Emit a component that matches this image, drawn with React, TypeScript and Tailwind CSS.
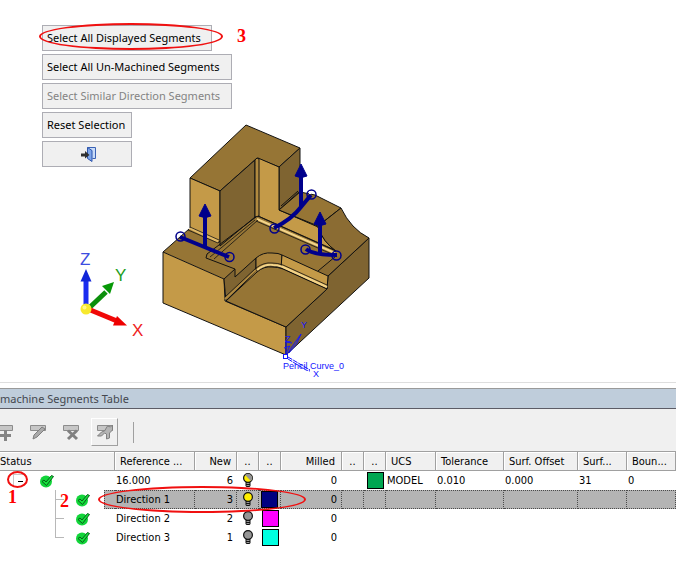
import type { ReactNode } from "react";
import { clsx } from "clsx";

type Bulb = "half" | "on" | "off";

type Segment = {
  name: string;
  count: number;
  bulb: Bulb;
  swatch: string;
  selected?: boolean;
  last?: boolean;
};

const segments: Segment[] = [
  { name: "Direction 1", count: 3, bulb: "on", swatch: "bg-[#000080]", selected: true },
  { name: "Direction 2", count: 2, bulb: "off", swatch: "bg-[#ff00ff]" },
  { name: "Direction 3", count: 1, bulb: "off", swatch: "bg-[#00ffe1]", last: true },
];

const columns = [
  { label: "Status", width: "w-[119px]", align: "text-left pl-1" },
  { label: "Reference ...", width: "w-[80px]", align: "text-left pl-[5px]" },
  { label: "New", width: "w-[42px]", align: "text-right pr-[5px]" },
  { label: "..", width: "w-[22px]", align: "text-center" },
  { label: "..", width: "w-[22px]", align: "text-center" },
  { label: "Milled", width: "w-[61px]", align: "text-right pr-[6px]" },
  { label: "..", width: "w-[22px]", align: "text-center" },
  { label: "..", width: "w-[22px]", align: "text-center" },
  { label: "UCS", width: "w-[50px]", align: "text-left pl-[5px]" },
  { label: "Tolerance", width: "w-[68px]", align: "text-left pl-[5px]" },
  { label: "Surf. Offset", width: "w-[74px]", align: "text-left pl-[5px]" },
  { label: "Surf...", width: "w-[49px]", align: "text-left pl-[5px]" },
  { label: "Boun...", width: "", align: "text-left pl-[5px]" },
];

function CommandButton({ children, className, disabled, label }: { children: ReactNode; className: string; disabled?: boolean; label?: string }) {
  return (
    <button
      type="button"
      disabled={disabled}
      aria-label={label}
      className={clsx(
        "flex h-[26px] items-center border border-[#adadb4] bg-[#f0f0f0] pl-1 whitespace-nowrap text-black disabled:text-[#838383]",
        className
      )}
    >
      {children}
    </button>
  );
}

function ExitIcon() {
  return (
    <svg width="16" height="16" viewBox="0 0 16 16" className="mx-auto">
      <path d="M6.5 1.5h8v11h-3" fill="#c9dcf8" stroke="#3b62b5" />
      <path d="M6.5 1.5l4.5 3v11l-4.5-3z" fill="#7ea6ea" stroke="#2d55ad" />
      <path d="M0 7.5h4V5l4.5 4L4 12.500V10.500H0z" fill="#303030" />
    </svg>
  );
}

function Triad() {
  return (
    <g fontFamily="'Liberation Sans', sans-serif" fontSize="17">
      <path d="M88 309L106 292" stroke="#0b8f0b" strokeWidth="5" />
      <path d="M114 282L110 294L102 286z" fill="#079807" />
      <path d="M88 309L117 321" stroke="#f00808" strokeWidth="5" />
      <path d="M127 325.500L113 325.500L117 316z" fill="#e00" />
      <path d="M86 307V280" stroke="#1a2cf0" strokeWidth="5" />
      <path d="M86 269L91.500 281.500H80.500z" fill="#1226d8" />
      <circle cx="86" cy="309" r="5.500" fill="#f7e92e" />
      <circle cx="84.500" cy="307.500" r="2" fill="#fff78a" />
      <text x="80" y="265" fill="#3d4de0">Z</text>
      <text x="115" y="281" fill="#1c9e1c">Y</text>
      <text x="132" y="336" fill="#ee2222">X</text>
    </g>
  );
}

function Part() {
  return (
    <g stroke="#111" strokeWidth="1" strokeLinejoin="round">
      {/* silhouette and floors */}
      <path d="M163 252L188 230L257 190L300 192L341 209Q350 228 369 238L328 276L286 327L224 279z" fill="#967535" stroke="none" />
      <path d="M163 252L189 229" fill="none" />
      {/* outer walls */}
      <path d="M163 252L224 279L225 301L286 327V355L163 303z" fill="#c49a48" />
      <path d="M286 327L327 289L328 276L369 238V278L286 355z" fill="#7f6431" />
      {/* tall block */}
      <path d="M246 125L300 148L279 167L257 158L220 191L190 178z" fill="#967535" />
      <path d="M190 178L220 191V242L190 228z" fill="#c49a48" />
      <path d="M220 191L255 160V217L220 246z" fill="#7f6431" />
      <path d="M279 167L300 148V191L279 210z" fill="#7f6431" />
      {/* back wall */}
      <path d="M258 158L279 167V210L318 227Q323 242 336 251L258 216z" fill="#c49a48" />
      <path d="M255 160L257 158L259 159V216L255 217z" fill="#b18a3f" />
      <path d="M257 219L335 253" stroke="#f3d489" strokeWidth="2" />
      <path d="M256 221L334 255M258 216L335 250" fill="none" strokeWidth="0.800" />
      {/* right step with concave flank */}
      <path d="M300 192L315 195L341 208L318 226L279 210z" fill="#967535" />
      <path d="M281 206L298 191" fill="none" />
      <path d="M341 208Q351 229 369 238L345 259L336 251Q323 242 318 227z" fill="#8b6c33" stroke="none" />
      <path d="M318 226L341 208Q351 229 369 238M318 227Q323 242 336 251" fill="none" />
      <path d="M369 238L328 276L318 271L337 256L345 258" fill="#8b6c33" stroke="none" />
      <path d="M369 238L328 276M318 271L336 256" fill="none" />
      {/* left step */}
      <path d="M189 229L191 227L219 240L218 243z" fill="#e0b865" stroke="none" />
      <path d="M190 227L219 240M188 230L218 243L220 241" fill="none" strokeWidth="0.800" />
      <path d="M256 217L207 254L206 258L235 269" fill="none" />
      <path d="M258 220L214 259M255 220L210 257" fill="none" strokeWidth="0.800" />
      {/* pocket */}
      <path d="M224 279L235 269V277L256 258V271L226 301z" fill="#7f6431" />
      <path d="M256 258Q263 252 272 253Q279 253 282 255V268Q267 262 256 271z" fill="#a8823c" />
      <path d="M282 255L328 276L327 289L281 268z" fill="#c49a48" />
      <path d="M226 301L257 272Q264 266 272 267Q278 267 283 269L327 289L286 327z" fill="#967535" />
      <path d="M257 270Q265 264 273 265Q278 265 283 267L327 287" fill="none" stroke="#f3d489" strokeWidth="2" />
      <path d="M225 299L256 270" fill="none" stroke="#b08a40" strokeWidth="2" />
      <path d="M256 268Q264 262 272 263Q278 263 283 265L327 285M225 297L256 268" fill="none" strokeWidth="0.800" />
    </g>
  );
}

function CurveMarks() {
  return (
    <g fill="none" stroke="#00008b" strokeWidth="1.500">
      <path d="M180 237L229 257" strokeWidth="4" />
      <path d="M205 247V216M301 206V176M320 254V223" strokeWidth="4" />
      <path d="M274 228Q292 219 301 207L311 195" strokeWidth="4" />
      <path d="M306 249Q313 255 337 255" strokeWidth="4" />
      <path d="M205 204L211 216Q205 219 199 216zM301 164L307 176Q301 179 295 176zM320 212L326 224Q320 227 314 224z" fill="#00008b" stroke="#00008b" strokeWidth="1" />
      <circle cx="180.500" cy="236.500" r="4.500" />
      <circle cx="229.500" cy="257" r="4.500" />
      <circle cx="274.500" cy="228.500" r="4.500" />
      <circle cx="311.500" cy="194.500" r="4.500" />
      <circle cx="305.500" cy="249.500" r="4.500" />
      <circle cx="336.500" cy="255.500" r="4.500" />
      <path d="M311 191h-2v3h2z" fill="#fff" stroke="none" />
    </g>
  );
}

function OriginMarks() {
  return (
    <g fill="none" stroke="#1414ff" strokeWidth="1">
      <rect x="283.500" y="354.500" width="4" height="4" fill="#fff" />
      <path d="M287 354L301 334L297 343L289 353M286 354V342L292 343M284 348L290 346L286 353" />
      <path d="M288 357L310 370M288 359L306 370L310 371" strokeDasharray="5 1" />
      <g fill="#1414ff" stroke="none" fontFamily="'Liberation Sans', sans-serif" fontSize="9">
        <text x="283" y="369">Pencil Curve_0</text>
        <text x="301" y="328">Y</text>
        <text x="285" y="342">Z</text>
        <text x="313" y="377">X</text>
      </g>
    </g>
  );
}

function BulbIcon({ state }: { state: Bulb }) {
  return (
    <svg width="12" height="15" viewBox="0 0 12 15" className="mx-auto block">
      <path d="M3.500 8h5v5l-1 1h-3l-1-1z" fill="#111" />
      <circle cx="6" cy="5" r="4.400" fill={state === "off" ? "#959595" : "#ffee00"} stroke="#111" strokeWidth="1.200" />
      {state === "half" && <path d="M3.100 2.100A4 4 0 0 1 8.900 7.900z" fill="#959595" />}
      <path d="M4.500 10.500h3M4.500 12.500h3" stroke="#999" />
    </svg>
  );
}

function CheckIcon() {
  return (
    <svg width="14" height="14" viewBox="0 0 14 14" className="block shrink-0">
      <circle cx="6" cy="7.500" r="6" fill="#12d53a" />
      <path d="M2 7.500L4 6L6 8L11.500 1.500L13.500 2.500L6.500 11.500z" fill="#16e03c" stroke="#075e18" />
    </svg>
  );
}

function ToolIcon({ kind }: { kind: "add" | "edit" | "delete" | "run" }) {
  return (
    <svg width="18" height="18" viewBox="0 0 18 18" className="block">
      <path d="M1.500 2.500h15v5h-15z" fill="#c6c6c6" stroke="#8c8c8c" />
      {kind === "add" && <path d="M8 7h3v4h4v3h-4v4H8v-4H4v-3h4z" fill="#858585" />}
      {kind === "edit" && <path d="M4 16l1-4L13 4l3 2-8 8z" fill="#aaa" stroke="#7e7e7e" />}
      {kind === "delete" && <path d="M6 7.500l9 8.500M15 7.500L6 16" stroke="#808080" strokeWidth="3" />}
      {kind === "run" && (
        <path d="M1.500 13l4-4 3-1 3-5 3 1 2-2v5l-3 3v5l-3 1v-5l-2-1-3 3z" fill="#b4b4b4" stroke="#808080" />
      )}
    </svg>
  );
}

function Swatch({ color }: { color: string }) {
  return <div className={clsx("mx-auto size-[17px] border border-black", color)} />;
}

function TreeBranch({ last }: { last?: boolean }) {
  return (
    <div className="h-[19px] w-[9px] shrink-0">
      <div className="h-[10px] border-b border-l border-[#b8b8b8]" />
      {!last && <div className="h-[9px] border-l border-[#b8b8b8]" />}
    </div>
  );
}

function SegmentRow({ segment }: { segment: Segment }) {
  const cell = clsx("h-[19px] p-0", segment.selected && "border-y border-r border-dotted border-[#4a4a4a] bg-[#b4b4b4]");
  return (
    <tr aria-selected={segment.selected}>
      <td className="h-[19px] p-0">
        <div className="flex h-[19px] items-center pl-[59px]">
          <TreeBranch last={segment.last} />
          <div className="ml-3">
            <CheckIcon />
          </div>
          {segment.selected && <div className="ml-[14px] h-full grow border-y border-l border-dotted border-[#4a4a4a] bg-[#b4b4b4]" />}
        </div>
      </td>
      <td className={clsx(cell, "pl-px")}>{segment.name}</td>
      <td className={clsx(cell, "text-right", segment.selected ? "pr-[3px]" : "pr-1")}>{segment.count}</td>
      <td className={cell}><BulbIcon state={segment.bulb} /></td>
      <td className={cell}><Swatch color={segment.swatch} /></td>
      <td className={clsx(cell, "text-right", segment.selected ? "pr-1" : "pr-[5px]")}>0</td>
      {columns.slice(6).map((_, i) => (
        <td key={i} className={cell} />
      ))}
    </tr>
  );
}

export default function App() {
  return (
    <main className="overflow-hidden bg-white text-black">
      <section className="relative min-h-[382px] pt-[25px] pl-[42px]">
        <svg width="400" height="382" viewBox="0 0 400 382" className="absolute top-0 left-0" role="img" aria-label="Machined part">
          <Triad />
          <Part />
          <CurveMarks />
          <OriginMarks />
        </svg>
        <div className="relative flex w-fit flex-col items-start gap-[3px] font-['Noto_Sans',sans-serif] text-[11px]">
          <CommandButton className="w-[170px]">Select All Displayed Segments</CommandButton>
          <CommandButton className="w-[190px]">Select All Un-Machined Segments</CommandButton>
          <CommandButton className="w-[190px]" disabled>Select Similar Direction Segments</CommandButton>
          <CommandButton className="w-[90px]">Reset Selection</CommandButton>
          <CommandButton className="w-[90px]" label="Exit"><ExitIcon /></CommandButton>
        </div>
        <div className="pointer-events-none absolute top-[23px] left-[39px] h-[27px] w-[184px] rounded-[50%] border-2 border-[#f01010]" />
        <span className="absolute top-[26px] left-[237px] font-['Liberation_Serif',serif] text-[18px] leading-5 font-bold text-[#ff0000]">3</span>
      </section>

      {/* the panel runs a little past the left edge of the window */}
      <section className="relative -ml-1 border-t border-[#dedede] pt-[5px]">
        <h2 className="h-[21px] border-t border-b border-t-[#9a9a9a] border-b-[#5c5c66] bg-[#bfcddb] pl-1 font-['Noto_Sans',sans-serif] text-[11px] leading-[19px] text-[#44474e]">
          machine Segments Table
        </h2>
        <div className="flex h-[42px] items-center bg-[#f0f0f0] pt-1">
          <button type="button" aria-label="Add segment" className="flex h-[27px] w-[25px] items-center"><ToolIcon kind="add" /></button>
          <button type="button" aria-label="Edit segment" className="flex h-[27px] w-[33px] items-center justify-center"><ToolIcon kind="edit" /></button>
          <button type="button" aria-label="Delete segment" className="flex h-[27px] w-[33px] items-center justify-center"><ToolIcon kind="delete" /></button>
          <button type="button" aria-label="Machine segments" className="ml-1 flex h-[28px] w-[27px] items-center justify-center border border-t-white border-r-[#a0a0a0] border-b-[#a0a0a0] border-l-white">
            <ToolIcon kind="run" />
          </button>
          <div className="ml-[15px] h-[21px] w-px bg-[#a0a0a0]" />
        </div>

        <table className="w-full table-fixed border-separate border-spacing-0 font-['DejaVu_Sans_Condensed','DejaVu_Sans',sans-serif] text-[11px] leading-[17px] whitespace-nowrap">
          <thead>
            <tr>
              {columns.map((column, i) => (
                <th
                  key={i}
                  scope="col"
                  className={clsx(
                    "h-[20px] border-y border-r border-[#a0a0a0] bg-[#f0f0f0] p-0 font-normal shadow-[inset_1px_1px_0_#fff]",
                    column.width,
                    column.align
                  )}
                >
                  {column.label}
                </th>
              ))}
            </tr>
          </thead>
          <tbody>
            <tr>
              <td className="h-[19px] p-0">
                <div className="flex h-[19px] items-center pl-[17px]">
                  <button type="button" aria-label="Collapse" aria-expanded="true" className="flex size-[13px] items-center justify-center border-t border-l border-[#c8c8c8]">
                    <span className="h-px w-[5px] bg-black" />
                  </button>
                  <div className="ml-[14px]"><CheckIcon /></div>
                </div>
              </td>
              <td className="p-0 pl-px">16.000</td>
              <td className="p-0 pr-1 text-right">6</td>
              <td className="p-0"><BulbIcon state="half" /></td>
              <td className="p-0" />
              <td className="p-0 pr-[5px] text-right">0</td>
              <td className="p-0" />
              <td className="p-0"><Swatch color="bg-[#00a651]" /></td>
              <td className="p-0 pl-px">MODEL</td>
              <td className="p-0 pl-px">0.010</td>
              <td className="p-0 pl-px">0.000</td>
              <td className="p-0 pl-px">31</td>
              <td className="p-0 pl-px">0</td>
            </tr>
            {segments.map((segment) => (
              <SegmentRow key={segment.name} segment={segment} />
            ))}
          </tbody>
        </table>

        <div className="pointer-events-none absolute top-[88px] left-[11px] h-[17px] w-[21px] rounded-[50%] border-2 border-[#f01010]" />
        <span className="absolute top-[104px] left-3 font-['Liberation_Serif',serif] text-[18px] leading-5 font-bold text-[#ff0000]">1</span>
        <span className="absolute top-[108px] left-16 font-['Liberation_Serif',serif] text-[18px] leading-5 font-bold text-[#ff0000]">2</span>
        <div className="pointer-events-none absolute top-[103px] left-[102px] h-[27px] w-[208px] rounded-[50%] border-2 border-[#f01010]" />
      </section>
    </main>
  );
}
